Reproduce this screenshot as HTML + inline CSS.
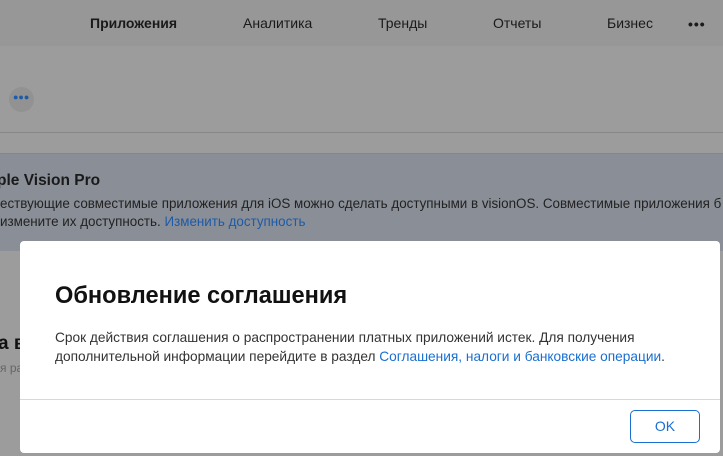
<!DOCTYPE html>
<html><head><meta charset="utf-8"><style>
*{margin:0;padding:0;box-sizing:border-box}
body{width:723px;height:456px;overflow:hidden;position:relative;background:#9c9c9c;font-family:"Liberation Sans","Noto Sans CJK SC",sans-serif;}
.nav{position:absolute;left:0;top:0;width:723px;height:46px;background:#979797;}
.nav span{position:absolute;top:15px;font-size:14px;color:#1a1a1a;}
.line{position:absolute;left:0;width:723px;height:1px;background:#878787}
.banner{position:absolute;left:0;top:153px;width:723px;height:98px;background:#8a8f97;border-top:1px solid #82878f}
.dots{position:absolute;left:9px;top:87px;width:25px;height:25px;border-radius:50%;background:#929292}
.modal{position:absolute;left:20px;top:241px;width:700px;height:212px;background:#fff;border-radius:4px}
.ok{position:absolute;left:610px;top:169px;width:70px;height:33px;border:1px solid #1a6fd0;border-radius:5px;color:#1a6fd0;font-size:14px;text-align:center;line-height:31px}
a{color:#1a6fd0;text-decoration:none}
</style></head><body>
<div class="nav">
<span style="left:90px;font-weight:bold">Приложения</span>
<span style="left:243px">Аналитика</span>
<span style="left:378px">Тренды</span>
<span style="left:493px">Отчеты</span>
<span style="left:607px">Бизнес</span>
<span style="left:688px;top:16px;font-weight:bold;letter-spacing:1px">•••</span>
</div>
<div class="dots"><span style="position:absolute;left:4px;top:5px;font-size:9px;color:#1d5aa8">●●●</span></div>
<div class="line" style="top:132px"></div>
<div class="banner">
<div style="position:absolute;left:0;top:18px;font-size:15.5px;font-weight:bold;color:#1a1a1a;margin-left:-3px">ple Vision Pro</div>
<div style="position:absolute;left:0;top:42px;font-size:13.4px;color:#222;white-space:nowrap">ествующие совместимые приложения для iOS можно сделать доступными в visionOS. Совместимые приложения б</div>
<div style="position:absolute;left:0;top:60px;font-size:13.4px;color:#222;white-space:nowrap">измените их доступность. <a style="color:#1d5aa8">Изменить доступность</a></div>
</div>
<div style="position:absolute;left:-2px;top:333px;font-size:19px;font-weight:bold;color:#111">а в</div>
<div style="position:absolute;left:0;top:361px;font-size:12px;color:#666">я ра</div>
<div style="position:absolute;left:700px;top:333px;font-size:19px;font-weight:bold;color:#111">е</div>
<div class="modal">
<div style="position:absolute;left:35px;top:42px;font-size:23.6px;font-weight:bold;color:#111">Обновление соглашения</div>
<div style="position:absolute;left:35px;top:87px;font-size:13.7px;line-height:19px;color:#333;width:660px">Срок действия соглашения о распространении платных приложений истек. Для получения<br>дополнительной информации перейдите в раздел <a>Соглашения, налоги и банковские операции</a>.</div>
<div style="position:absolute;left:0;top:158px;width:700px;height:1px;background:#d8d8d8"></div>
<div class="ok">OK</div>
</div>
</body></html>
